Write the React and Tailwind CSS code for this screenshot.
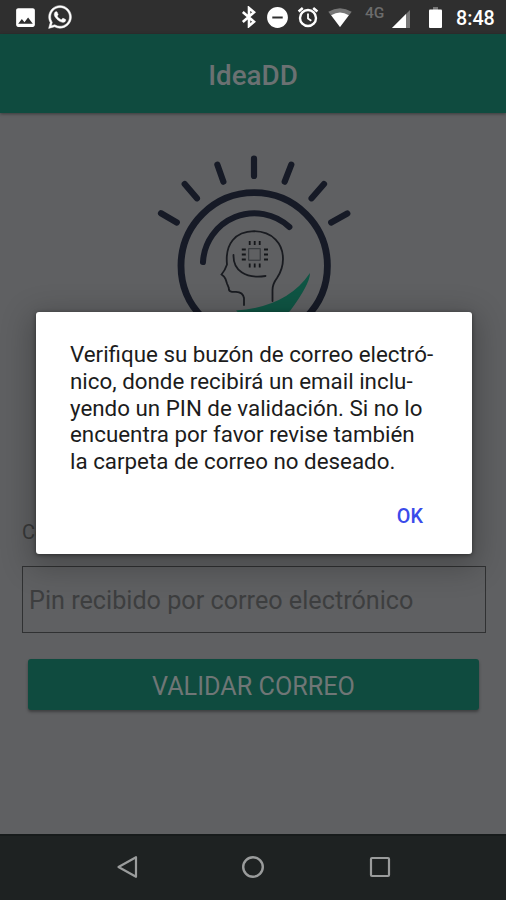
import { FaWhatsapp } from "react-icons/fa";
import { MdDoNotDisturbOn, MdImage } from "react-icons/md";

const messageLines = [
  "Verifique su buzón de correo electró-",
  "nico, donde recibirá un email inclu-",
  "yendo un PIN de validación. Si no lo",
  "encuentra por favor revise también",
  "la carpeta de correo no deseado.",
];

function BluetoothIcon() {
  return (
    <svg width="16" height="22" viewBox="0 0 16 22" fill="none" stroke="currentColor" strokeWidth="2.6">
      <path d="M1.8 6 13 15.8 8 20V2L13 6.2 1.8 16" />
    </svg>
  );
}

function AlarmIcon() {
  return (
    <svg width="22" height="22" viewBox="0 0 22 22" fill="none" stroke="currentColor">
      <circle cx="11" cy="12" r="8" strokeWidth="2.4" />
      <path d="M11 7.5v5l3.3 2.3" strokeWidth="1.8" />
      <path d="M1.6 5.4 5.8 1.9M20.4 5.4l-4.2-3.5" strokeWidth="2.6" />
    </svg>
  );
}

function WifiIcon() {
  return (
    <svg width="24" height="19" viewBox="0 0 24 19">
      <path d="M0.3 3.8Q12-3.4 23.7 3.8L12 19Z" fill="#777" />
      <path d="M3.2 7.2Q12 1.8 20.8 7.2L12 19Z" fill="#fff" />
    </svg>
  );
}

function SignalIcon() {
  return (
    <svg width="18" height="18" viewBox="0 0 18 18">
      <path d="M18 0v18H0Z" fill="#777" />
      <path d="M14 4v14H0Z" fill="#fff" />
    </svg>
  );
}

function BatteryIcon() {
  return (
    <svg width="13" height="21" viewBox="0 0 13 21">
      <path d="M4 0h5v3H4Z" fill="#777" />
      <path d="M0 3.5Q0 2.5 1 2.5h11q1 0 1 1V20q0 1-1 1H1q-1 0-1-1Z" fill="#fff" />
    </svg>
  );
}

function StatusBar() {
  return (
    <div className="flex h-[34px] items-center bg-[#2f2f2f] text-white">
      <MdImage size={25} className="ml-[13px]" />
      <FaWhatsapp size={26} stroke="currentColor" strokeWidth={10} className="ml-[9px]" />
      <div className="ml-auto flex items-center pr-[11px]">
        <BluetoothIcon />
        <MdDoNotDisturbOn size={25} className="ml-[8px]" />
        <span className="ml-[7px]">
          <AlarmIcon />
        </span>
        <span className="ml-[9px]">
          <WifiIcon />
        </span>
        <span className="mb-[7px] ml-[13px] w-[21px] text-[15.5px] leading-none font-medium text-[#6c6c6c]">4G</span>
        <span className="mt-[3px] ml-[6px]">
          <SignalIcon />
        </span>
        <span className="ml-[19px]">
          <BatteryIcon />
        </span>
        <span className="mt-1 ml-[14px] w-[39px] text-[19.7px] leading-none font-medium whitespace-nowrap">8:48</span>
      </div>
    </div>
  );
}

function Logo() {
  return (
    <svg className="mx-auto mt-[32px] block" width="206" height="206" viewBox="0 0 206 206" fill="none" strokeLinecap="round">
      <g stroke="#161a26" strokeWidth="6.2">
        <path d="M104 13.7V31M67.4 19.7 73.4 36.7M141.3 19.7 134.7 36.7M34.7 39 46.9 53.3M174 39 161.6 53.3M11 68.3 26.8 77.5M197.3 68.5 181.2 77.5" />
        <circle cx="104.2" cy="120.8" r="73.2" strokeWidth="6.8" />
        <path d="M53 117A51.5 51.5 0 0 1 139.4 82" strokeWidth="6" />
      </g>
      <g stroke="#191b20" strokeWidth="1.8">
        <path d="M94 160V153Q93 147 86 146.8H82Q78.5 146.5 78.8 143L77 138.5 75.5 134 74 131.5 71.5 129.5Q75 125.5 77 119.5C75 99 85 86.5 104 86.2C123 86.5 133 99 133 114C133 122 131 127 127 133Q122.5 139 122.5 145V156" />
        <path d="M83.5 110C83 125 95 134 115.5 131" />
      </g>
      <rect x="98.7" y="103.7" width="11.5" height="11.5" stroke="#303337" strokeWidth="1" />
      <path
        d="M99.7 96v4M104.7 96v4M109.7 96v4M99.7 118.5v4M104.7 118.5v4M109.7 118.5v4M91.8 104.5h4M91.8 109.5h4M91.8 114.5h4M114 104.5h4M114 109.5h4M114 114.5h4"
        stroke="#141619"
        strokeWidth="1.8"
        strokeLinecap="butt"
      />
      <path d="M86 165.5Q137 162 160 128Q160 139 140 166Q110 190 86 165.5Z" fill="#0f5544" />
    </svg>
  );
}

function NavBar() {
  return (
    <div className="flex h-[66px] items-center justify-center gap-[103.5px] border-t-2 border-[#171b1b] bg-[#1e2222] pb-[3px] text-[#9a9c9c]">
      <svg width="22" height="24" viewBox="0 0 22 24" fill="none" stroke="currentColor" strokeWidth="2.2" strokeLinejoin="round">
        <path d="M20 2.2V21.8L2.5 12Z" />
      </svg>
      <svg width="24" height="24" viewBox="0 0 24 24" fill="none" stroke="currentColor" strokeWidth="2.4">
        <circle cx="12" cy="12" r="9.8" />
      </svg>
      <svg width="22" height="22" viewBox="0 0 22 22" fill="none" stroke="currentColor" strokeWidth="2.2">
        <rect x="2" y="2" width="18" height="18" rx="1" />
      </svg>
    </div>
  );
}

function Dialog() {
  return (
    <div className="absolute top-[312px] left-[36px] flex h-[242px] w-[436px] flex-col rounded-[3px] bg-white pt-[29px] pl-[34px] shadow-[0_8px_30px_6px_rgba(0,0,0,0.24),0_1px_4px_rgba(0,0,0,0.45)]">
      <p className="text-[22.35px] leading-[26.8px] text-[#1c1c1c]">
        {messageLines.map((line) => (
          <span key={line} className="block whitespace-nowrap">
            {line}
          </span>
        ))}
      </p>
      <button className="mt-[30px] mr-[49px] self-end text-[19.8px] leading-[24px] font-medium text-[#3a4bea]">OK</button>
    </div>
  );
}

export default function App() {
  return (
    <div className="relative flex h-[900px] w-[506px] flex-col overflow-hidden bg-[#5f6062] font-[Roboto,sans-serif]">
      <StatusBar />
      <header className="flex h-[79px] items-center justify-center bg-[#0f4b3f] pt-1 text-[27.8px] font-medium text-[#6b7172] shadow-[0_1px_3px_rgba(0,0,0,0.4)]">
        IdeaDD
      </header>
      <main className="flex flex-1 flex-col">
        <Logo />
        <div className="mt-[169px] ml-[22px] h-[24px] text-[20px] leading-[24px] text-[#383939]">Correo</div>
        <div className="mt-[22px] mr-[20px] ml-[22px] flex h-[67px] shrink-0 items-center border-[1.5px] border-[#303132] pt-0.5 pl-[6px] text-[25.2px] text-[#3d3e3f]">
          Pin recibido por correo electrónico
        </div>
        <button className="mt-[26px] mr-[27px] ml-[28px] h-[51px] shrink-0 rounded-[3px] bg-[#0f4b3f] pt-1 text-[25.2px] text-[#6f7676] shadow-[0_2px_3px_rgba(0,0,0,0.35)]">
          VALIDAR CORREO
        </button>
      </main>
      <NavBar />
      <Dialog />
    </div>
  );
}
